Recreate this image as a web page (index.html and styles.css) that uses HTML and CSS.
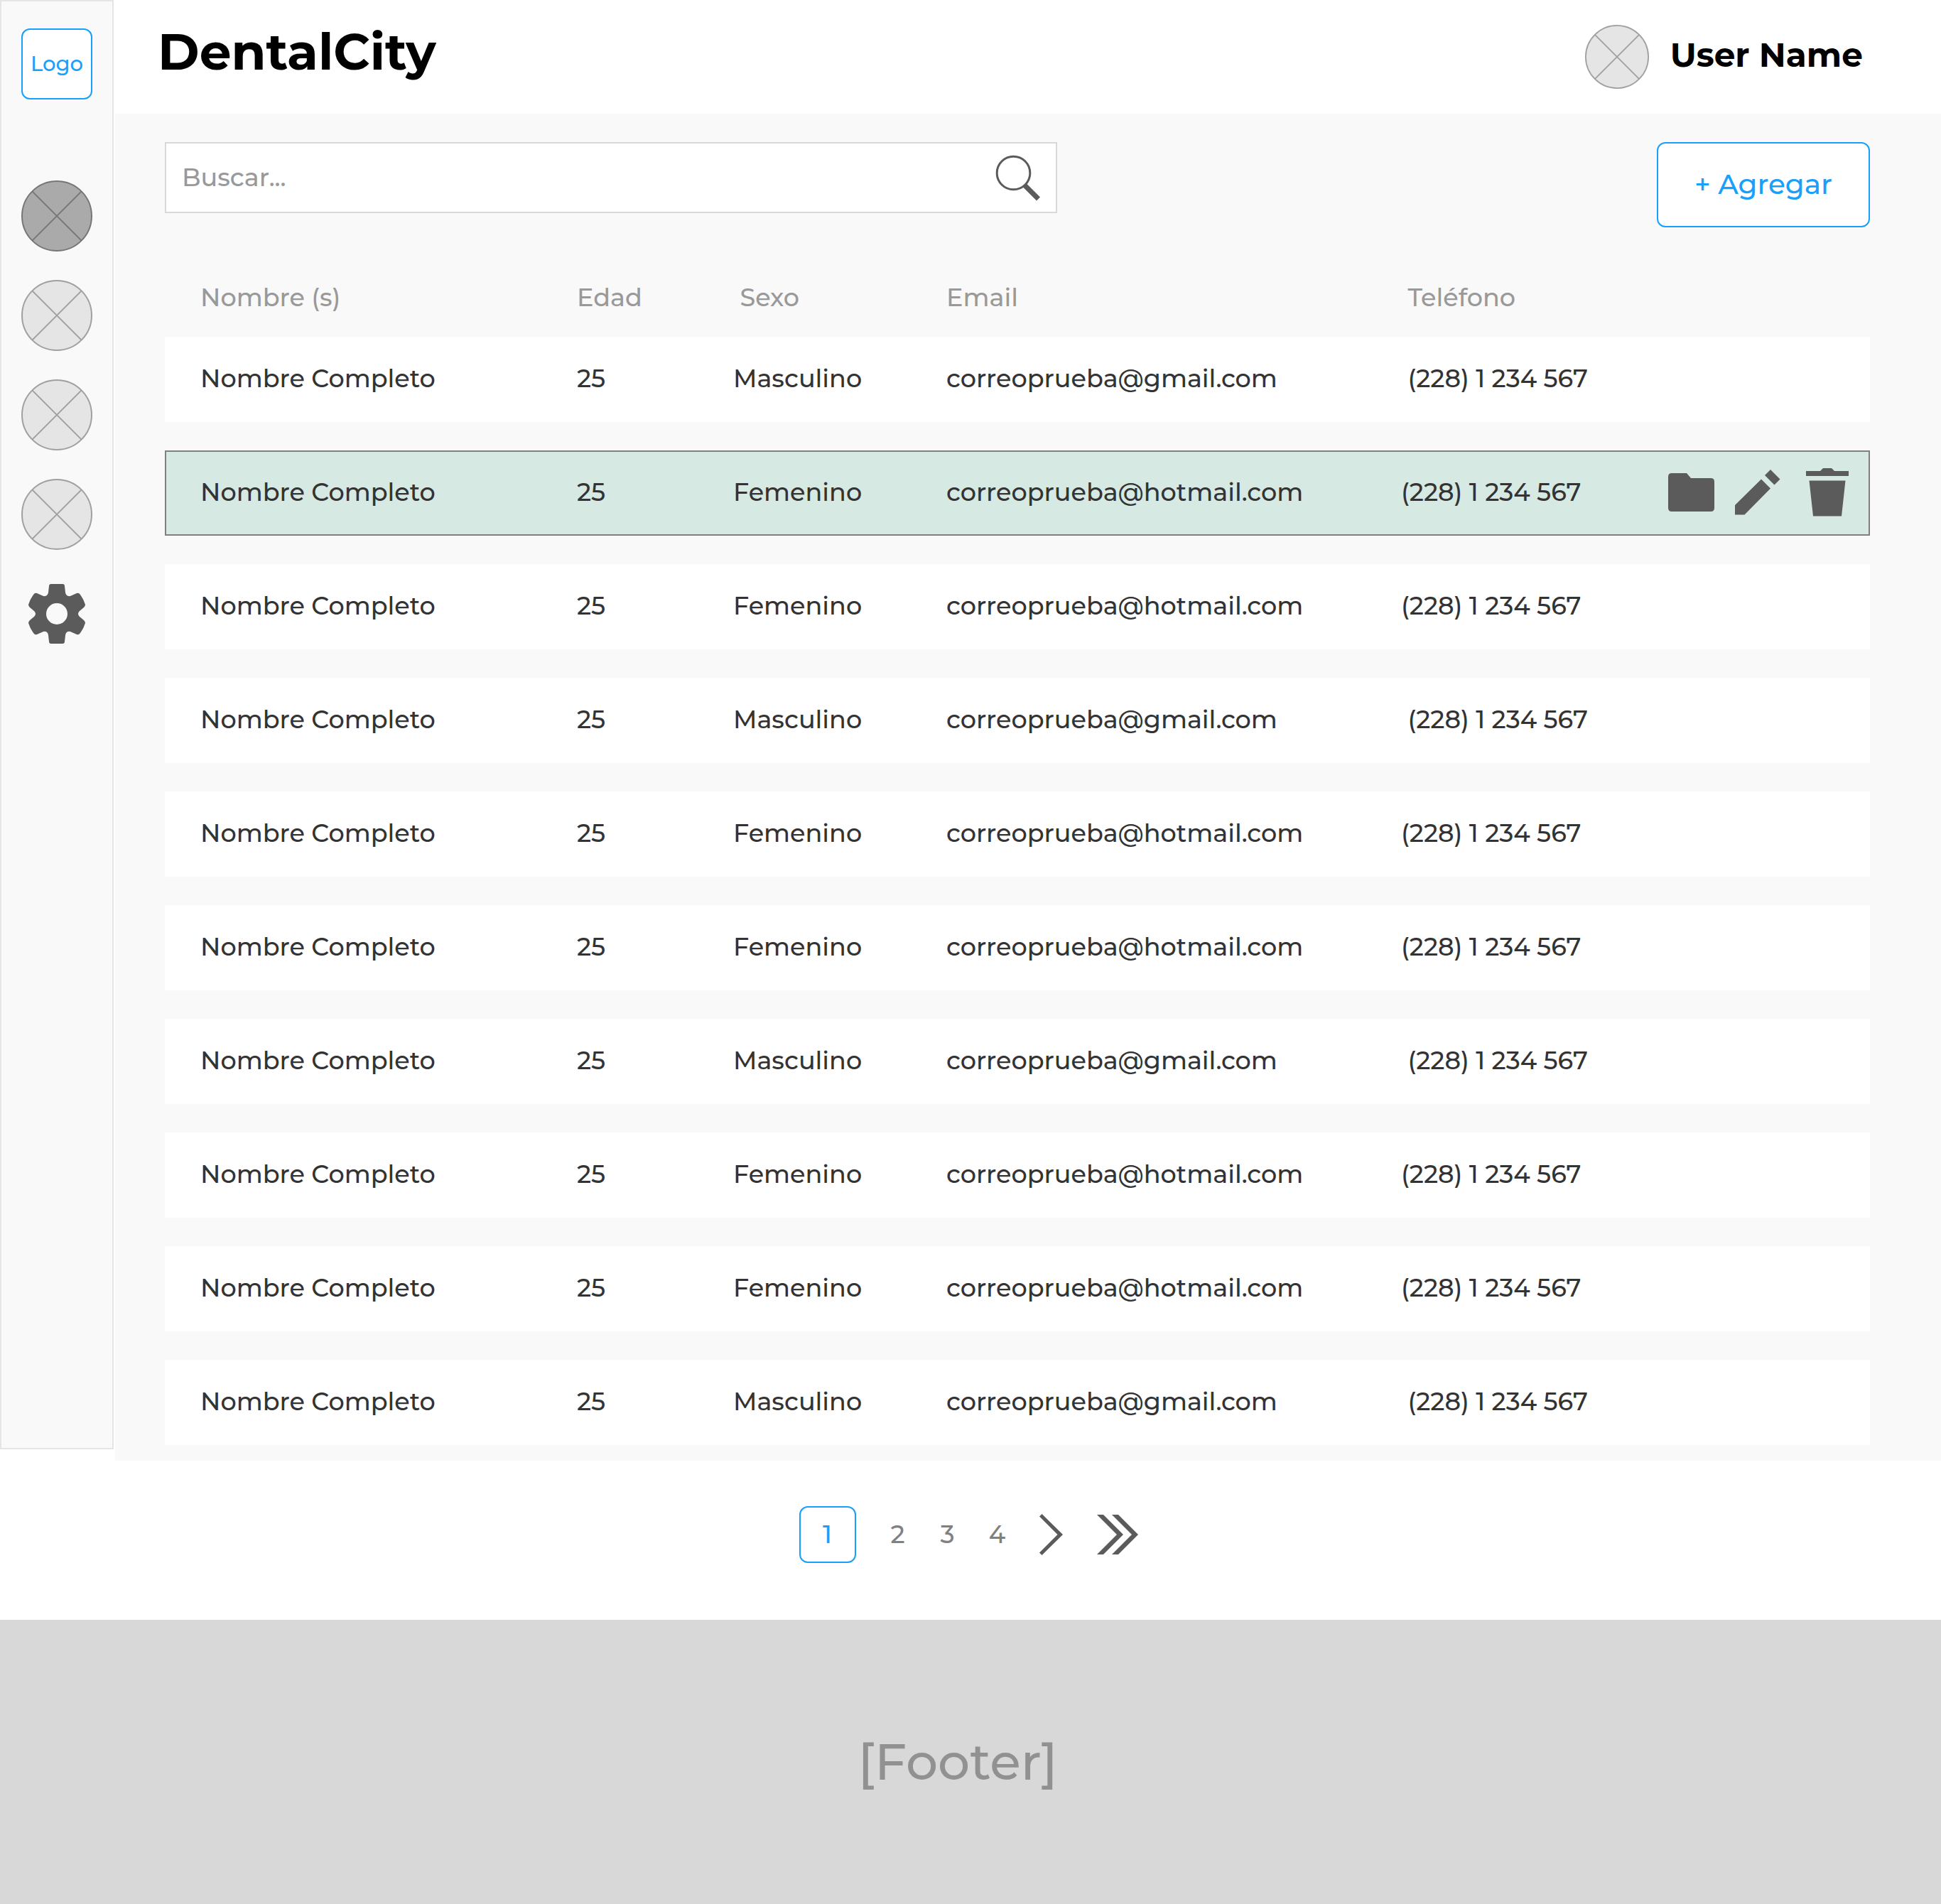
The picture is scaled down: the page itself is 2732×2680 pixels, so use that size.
FILE: index.html
```
<!DOCTYPE html>
<html lang="es">
<head>
<meta charset="utf-8">
<title>DentalCity</title>
<link rel="stylesheet" href="styles.css">
</head>
<body>
<svg class="sprite" aria-hidden="true">
  <symbol id="placeholder" viewBox="0 0 100 100">
    <circle cx="50" cy="50" r="49"/>
    <path d="M15.4 15.4 84.6 84.6M84.6 15.4 15.4 84.6"/>
  </symbol>
</svg>
<div class="shell">
  <aside class="sidebar">
    <a class="logo" href="#">Logo</a>
    <nav class="side-nav" aria-label="Principal">
      <a class="side-link active" href="#" aria-label="Pacientes"><svg class="disc"><use href="#placeholder"/></svg></a>
      <a class="side-link" href="#" aria-label="Agenda"><svg class="disc"><use href="#placeholder"/></svg></a>
      <a class="side-link" href="#" aria-label="Pagos"><svg class="disc"><use href="#placeholder"/></svg></a>
      <a class="side-link" href="#" aria-label="Reportes"><svg class="disc"><use href="#placeholder"/></svg></a>
      <a class="side-link" href="#" aria-label="Ajustes"><svg class="gear" viewBox="-42 -42 84 84"><path fill-rule="evenodd" d="M-8 -42H8Q11 -42 11 -39L12 -30Q13 -24 19 -25L28 -29Q31 -30 33 -27Q38 -20 40 -13Q40 -11 38 -9L32 -4Q28 0 32 4L38 9Q40 11 40 13Q38 20 33 27Q31 30 28 29L19 25Q13 24 12 30L11 39Q11 42 8 42H-8Q-11 42 -11 39L-12 30Q-13 24 -19 25L-28 29Q-31 30 -33 27Q-38 20 -40 13Q-40 11 -38 9L-32 4Q-28 0 -32 -4L-38 -9Q-40 -11 -40 -13Q-38 -20 -33 -27Q-31 -30 -28 -29L-19 -25Q-13 -24 -12 -30L-11 -39Q-11 -42 -8 -42ZM0 -15A15 15 0 1 0 0 15A15 15 0 1 0 0 -15Z"/></svg></a>
    </nav>
  </aside>
  <div class="page">
    <header class="topbar">
      <h1 class="brand">DentalCity</h1>
      <div class="user">
        <svg class="disc avatar"><use href="#placeholder"/></svg>
        <span class="user-name">User Name</span>
      </div>
    </header>
    <main class="content">
      <div class="toolbar">
        <form class="search" role="search">
          <input class="search-input" type="search" placeholder="Buscar..." aria-label="Buscar">
          <button class="icon-button" type="button" aria-label="Buscar"><svg class="icon-search" viewBox="0 0 64 66"><circle cx="26.500" cy="26.500" r="23.300"/><path d="M42.500 44 61.500 63"/></svg></button>
        </form>
        <button class="add-button" type="button">+ Agregar</button>
      </div>
      <table class="patients">
        <thead>
          <tr><th>Nombre (s)</th><th>Edad</th><th>&nbsp;Sexo</th><th>Email</th><th>&nbsp;Teléfono</th></tr>
        </thead>
        <tbody>
          <tr><td>Nombre Completo</td><td>25</td><td>Masculino</td><td>correoprueba@gmail.com</td><td>&nbsp;(228) 1 234 567</td></tr>
          <tr class="selected"><td>Nombre Completo</td><td>25</td><td>Femenino</td><td>correoprueba@hotmail.com</td><td>(228) 1 234 567</td>
            <td class="actions">
              <button class="icon-button" type="button" aria-label="Abrir expediente"><svg class="icon-folder" viewBox="0 0 65 54"><path d="M5 0H26L32 7H60Q65 7 65 12V49Q65 54 60 54H5Q0 54 0 49V5Q0 0 5 0Z"/></svg></button>
              <button class="icon-button" type="button" aria-label="Editar"><svg class="icon-pencil" viewBox="0 0 71 64"><path d="M0 50 37 13.500 50 26.500 13.500 63.500H0ZM50 0 63.500 13.500 55.500 21.500 42 8Z"/></svg></button>
              <button class="icon-button" type="button" aria-label="Eliminar"><svg class="icon-trash" viewBox="0 0 60 68"><path d="M0 4H20L24 0H36L40 4H60V11H0ZM4.500 17.500H55.500L50 67.500H10Z"/></svg></button>
            </td></tr>
          <tr><td>Nombre Completo</td><td>25</td><td>Femenino</td><td>correoprueba@hotmail.com</td><td>(228) 1 234 567</td></tr>
          <tr><td>Nombre Completo</td><td>25</td><td>Masculino</td><td>correoprueba@gmail.com</td><td>&nbsp;(228) 1 234 567</td></tr>
          <tr><td>Nombre Completo</td><td>25</td><td>Femenino</td><td>correoprueba@hotmail.com</td><td>(228) 1 234 567</td></tr>
          <tr><td>Nombre Completo</td><td>25</td><td>Femenino</td><td>correoprueba@hotmail.com</td><td>(228) 1 234 567</td></tr>
          <tr><td>Nombre Completo</td><td>25</td><td>Masculino</td><td>correoprueba@gmail.com</td><td>&nbsp;(228) 1 234 567</td></tr>
          <tr><td>Nombre Completo</td><td>25</td><td>Femenino</td><td>correoprueba@hotmail.com</td><td>(228) 1 234 567</td></tr>
          <tr><td>Nombre Completo</td><td>25</td><td>Femenino</td><td>correoprueba@hotmail.com</td><td>(228) 1 234 567</td></tr>
          <tr><td>Nombre Completo</td><td>25</td><td>Masculino</td><td>correoprueba@gmail.com</td><td>&nbsp;(228) 1 234 567</td></tr>
        </tbody>
      </table>
    </main>
  </div>
</div>
<nav class="pagination" aria-label="Paginación">
  <a class="page-link current" href="#" aria-current="page">1</a>
  <a class="page-link" href="#">2</a>
  <a class="page-link" href="#">3</a>
  <a class="page-link" href="#">4</a>
  <a class="page-arrow" href="#" aria-label="Siguiente"><svg class="icon-next" viewBox="0 0 33 58"><path d="M3.500 0 33 29 3.500 58 0 54.500 25.500 29 0 3.500Z"/></svg></a>
  <a class="page-arrow" href="#" aria-label="Última"><svg class="icon-last" viewBox="0 0 58 56"><path d="M0 0H9L37 28 9 56H0L28 28ZM21 0H30L58 28 30 56H21L49 28Z"/></svg></a>
</nav>
<footer class="footer">[Footer]</footer>
</body>
</html>
```
FILE: styles.css
```
* { box-sizing: border-box; }

body {
  margin: 0;
  min-height: 100vh;
  display: flex;
  flex-direction: column;
  background: #fff;
  color: #333;
  font-family: Montserrat, Inter, "Noto Sans", sans-serif;
  font-size: 35px;
  font-weight: 500;
  line-height: 44px;
}

a { color: inherit; text-decoration: none; }
button { padding: 0; border: 0; background: none; font: inherit; cursor: pointer; }
svg { display: block; fill: #5b5b5b; }
.sprite { position: absolute; width: 0; height: 0; }

.shell { display: flex; gap: 2px; }

/* Sidebar */
.sidebar {
  flex: none;
  width: 160px;
  margin-bottom: 16px;
  padding-top: 38px;
  display: flex;
  flex-direction: column;
  align-items: center;
  gap: 114px;
  background: #f9f9f9;
  border: 2px solid #e5e5e5;
}
.logo {
  width: 100px;
  height: 100px;
  display: grid;
  place-items: center;
  border: 2px solid #18a0fb;
  border-radius: 12px;
  background: #fff;
  color: #18a0fb;
  font-size: 29px;
}
.side-nav { display: flex; flex-direction: column; gap: 40px; }
.side-link { width: 100px; height: 100px; display: grid; place-items: center; }
.disc { width: 100px; height: 100px; fill: #e5e5e5; stroke: #a0a0a0; stroke-width: 2px; }
.active .disc { fill: #aaa; stroke: #777; }
.gear { width: 84px; height: 84px; }

/* Header */
.page { flex: 1; min-width: 0; display: flex; flex-direction: column; }
.topbar {
  height: 160px;
  padding: 0 110px 0 60px;
  display: flex;
  justify-content: space-between;
  align-items: center;
  color: #000;
}
.brand { margin: 0 0 14px; font-size: 71px; line-height: 88px; font-weight: 700; }
.user { display: flex; align-items: center; gap: 30px; font-size: 47px; font-weight: 700; }
.user-name { padding-bottom: 4px; }
.avatar { width: 90px; height: 90px; }

/* Content */
.content { flex: 1; padding: 40px 100px 22px 70px; background: #f9f9f9; }
.toolbar { display: flex; justify-content: space-between; align-items: flex-start; }
.search {
  width: 1256px;
  height: 100px;
  padding: 0 22px;
  display: flex;
  align-items: center;
  background: #fff;
  border: 2px solid #d8d8d8;
}
.search-input {
  flex: 1;
  min-width: 0;
  padding: 0;
  border: 0;
  outline: 0;
  background: none;
  color: inherit;
  font: inherit;
}
.search-input::placeholder { color: #999; opacity: 1; }
.icon-search { width: 64px; height: 66px; fill: none; stroke: #5b5b5b; stroke-width: 3px; }
.icon-search path { stroke-width: 7px; }
.add-button {
  width: 300px;
  height: 120px;
  padding-bottom: 2px;
  border: 2px solid #18a0fb;
  border-radius: 12px;
  background: #fff;
  color: #18a0fb;
  font-size: 39px;
}

.patients, .patients thead { display: block; }
.patients tbody { display: flex; flex-direction: column; gap: 40px; }
.patients tr {
  height: 120px;
  padding: 0 30px 2px 50px;
  display: grid;
  grid-template-columns: 530fr 220fr 300fr 640fr 320fr 310fr;
  align-items: center;
}
.patients th, .patients td { padding: 0; text-align: left; font-weight: 500; white-space: nowrap; }
.patients th { color: #999; }
.patients thead tr { height: 154px; padding-top: 46px; }
.patients tbody tr { background: #fff; }
.patients tbody .selected { background: #d6e9e3; box-shadow: inset 0 0 0 2px #808080; }
.patients .actions { display: flex; justify-content: flex-end; align-items: center; gap: 29px; }
.icon-folder { width: 65px; height: 54px; }
.icon-pencil { width: 71px; height: 64px; }
.icon-trash { width: 60px; height: 68px; }

/* Pagination */
.pagination {
  padding: 64px 6px 80px 0;
  display: flex;
  justify-content: center;
  align-items: center;
  color: #808080;
}
.page-link { width: 70px; text-align: center; }
.current {
  width: 80px;
  height: 80px;
  display: grid;
  place-items: center;
  margin-right: 24px;
  border: 2px solid #18a0fb;
  border-radius: 12px;
  color: #18a0fb;
}
.page-arrow { margin-left: 24px; }
.page-arrow + .page-arrow { margin-left: 48px; }
.icon-next { width: 33px; height: 58px; }
.icon-last { width: 58px; height: 56px; }

.footer {
  flex: 1;
  min-height: 400px;
  padding-right: 36px;
  display: grid;
  place-items: center;
  background: #d8d8d8;
  color: #919191;
  font-size: 71px;
  line-height: 88px;
}
```
